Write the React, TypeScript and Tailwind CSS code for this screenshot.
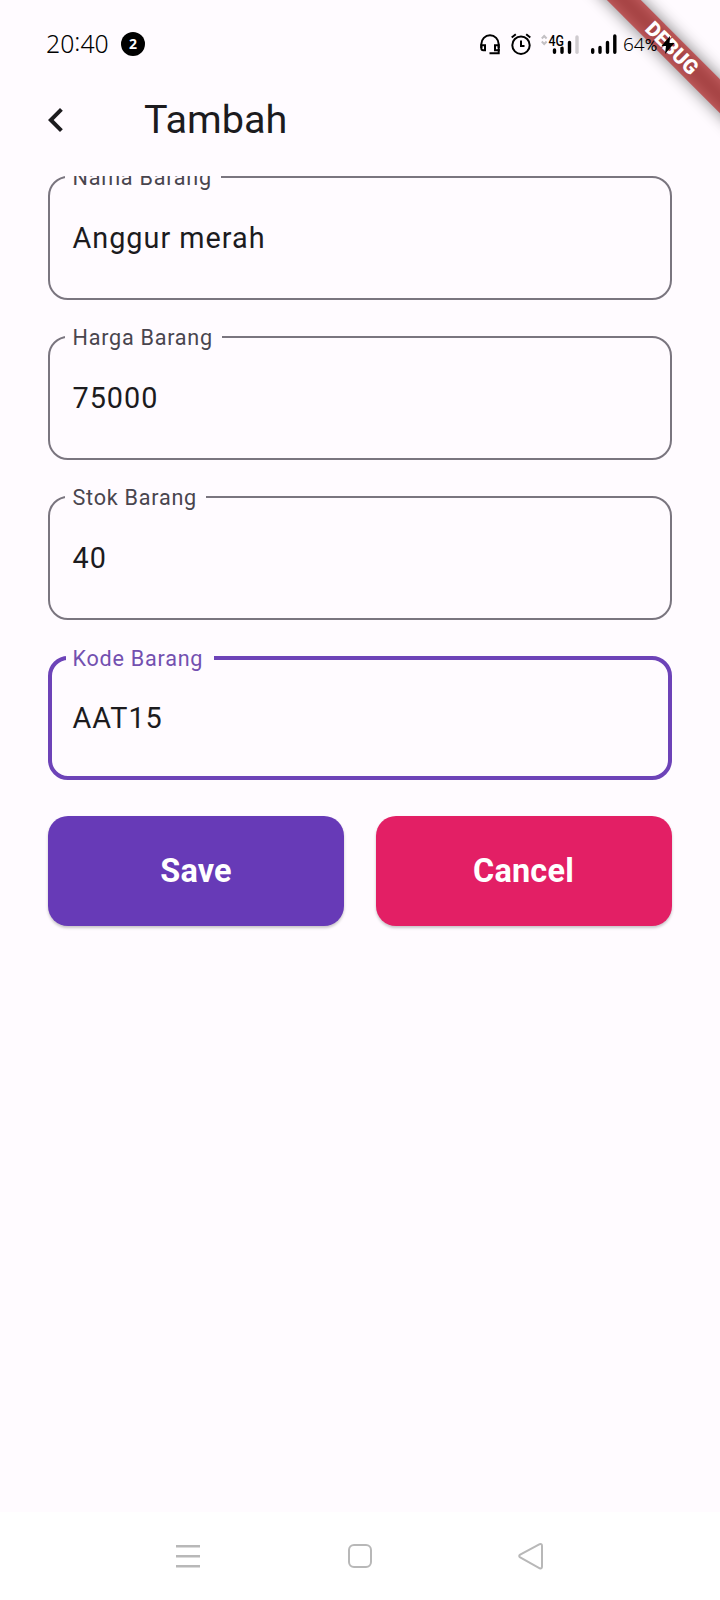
type FieldProps = { label: string; value: string; focused?: boolean };

function Field({ label, value, focused = false }: FieldProps) {
  return (
    <div
      className={
        focused
          ? "relative h-[124px] shrink-0 rounded-[20px] border-4 border-[#6d43b8] pl-[20.5px] pt-[39px]"
          : "relative h-[124px] shrink-0 rounded-[20px] border-2 border-[#7a757f] pl-[22.5px] pt-[41px]"
      }
    >
      <span
        className={
          focused
            ? "absolute left-[14px] -top-[15px] h-7 whitespace-nowrap bg-[#fffbff] pl-[6.5px] pr-[11px] text-[21.6px] leading-7 tracking-[0.75px] text-[#7350b0]"
            : "absolute left-[15px] -top-[14px] h-7 whitespace-nowrap bg-[#fffbff] pl-[7.5px] pr-[9px] text-[21.6px] leading-7 tracking-[0.75px] text-[#49454e]"
        }
      >
        {label}
      </span>
      <p className="text-[28.8px] leading-[38px] tracking-[1px] text-[#1c1b1e]">{value}</p>
    </div>
  );
}

function StatusBar() {
  return (
    <div className="relative z-20 flex h-[88px] items-center text-black">
      <span className="ml-[46px] flex w-[64px] -translate-y-px font-['Noto_Sans',sans-serif] text-[24.8px] leading-[30px] font-[350]">
        20<span className="-translate-y-[2px]">:</span>40
      </span>
      <span className="ml-[11px] flex size-6 items-center justify-center rounded-full bg-black font-['Open_Sans',sans-serif] text-[14px] leading-none font-bold text-white">
        2
      </span>
      <svg className="ml-[335px] h-6 w-5 shrink-0" viewBox="0 0 20 24" fill="none" stroke="black" strokeWidth="2">
        <path d="M1.300 16V12.200A8.700 9 0 0 1 18.700 12.200V16" />
        <path d="M1.300 13.300H5V18.300H3.300A2 2 0 0 1 1.300 16.300Z M18.700 13.300H15V18.300H18.700Z" />
        <path d="M18.700 17V21.300H9.500" />
      </svg>
      <svg className="ml-[11px] h-6 w-5 shrink-0" viewBox="0 0 20 24" fill="none" stroke="black" strokeWidth="2">
        <circle cx="10" cy="13.200" r="8.700" />
        <path d="M10 8.500V14H13.500" />
        <path d="M0.700 5.500L4.800 2.300M19.300 5.500L15.200 2.300" />
      </svg>
      <svg className="ml-[10px] h-6 w-[38px] shrink-0" viewBox="0 0 38 24">
        <path d="M0.800 6.500L3.200 4L5.600 6.500M0.800 9.500L3.200 12L5.600 9.500" fill="none" stroke="#c3c0c4" strokeWidth="2" />
        <g stroke="black" strokeWidth="3.400" strokeLinecap="round">
          <path d="M13.500 18V20.300M21 16V20.300M28.500 10.500V20.300" />
          <path d="M36 5V20.300" stroke="#cfcbcf" />
        </g>
        <text x="7.500" y="13.500" fontSize="15" fontWeight="500" fontFamily="Roboto, sans-serif" stroke="#fffbff" strokeWidth="1.500" paintOrder="stroke" textLength="15.500" lengthAdjust="spacingAndGlyphs">
          4G
        </text>
      </svg>
      <svg className="ml-[11px] h-6 w-[27px] shrink-0" viewBox="0 0 27 24" stroke="black" strokeWidth="3.400" strokeLinecap="round">
        <path d="M2.700 17.700V20.300M10 15.500V20.300M17.500 10.500V20.300M24.800 4V20.300" />
      </svg>
      <span className="ml-[6px] flex w-[34px] items-baseline font-['Noto_Sans',sans-serif] text-[19px] leading-6 font-[350] whitespace-nowrap">
        64<span className="font-[Roboto,sans-serif] text-[17px] font-normal">%</span>
      </span>
      <svg className="ml-[4px] h-6 w-[14px] shrink-0" viewBox="0 0 14 24">
        <path d="M9 4L0.500 14H5L4 22L13.500 11H8.500Z" fill="black" />
      </svg>
    </div>
  );
}

export default function App() {
  return (
    <div className="relative flex h-[1600px] w-[720px] flex-col overflow-hidden bg-[#fffbff] font-[Roboto,sans-serif]">
      <StatusBar />
      <div className="absolute top-0 left-[560px] z-10 h-[24px] w-[320px] origin-[160px_0px] rotate-45">
        <div className="absolute left-[60px] top-[56px] h-6 w-[200px] bg-black/50 blur-[7.9px]" />
        <div className="absolute left-[60px] top-[56px] flex h-6 w-[200px] items-center justify-center bg-[#b71c1c]/63 text-[20.4px] leading-none font-black text-white">
          DEBUG
        </div>
      </div>
      <header className="flex h-[88px] shrink-0 items-center pb-6">
        <svg className="ml-8 size-12" viewBox="0 0 24 24" fill="#1c1b1e">
          <path d="M15.410 7.410L14 6l-6 6 6 6 1.410-1.410L10.830 12z" />
        </svg>
        <h1 className="ml-16 text-[39.6px] leading-[50px] text-[#1c1b1e]">Tambah</h1>
      </header>
      <main className="flex min-h-0 flex-1 flex-col gap-9 overflow-hidden px-12">
        <Field label="Nama Barang" value="Anggur merah" />
        <Field label="Harga Barang" value="75000" />
        <Field label="Stok Barang" value="40" />
        <Field label="Kode Barang" value="AAT15" focused />
        <div className="grid shrink-0 grid-cols-2 gap-8">
          <button className="h-[110px] rounded-[20px] bg-[#673ab7] text-[32.4px] font-bold tracking-[0.2px] text-white shadow-[0_2px_3px_rgba(0,0,0,0.22)]">
            Save
          </button>
          <button className="h-[110px] rounded-[20px] bg-[#e31f65] pr-[7px] pl-[6px] text-[32.4px] font-bold tracking-[0.2px] text-white shadow-[0_2px_3px_rgba(0,0,0,0.22)]">
            Cancel
          </button>
        </div>
      </main>
      <nav className="flex h-[88px] shrink-0 items-center bg-white">
        <svg className="ml-[175px] h-[30px] w-[26px]" viewBox="0 0 26 30" stroke="#b8b8b8" strokeWidth="2.500">
          <path d="M1 5.300H25M1 15.300H25M1 25.300H25" />
        </svg>
        <svg className="ml-[146px] h-[30px] w-[26px]" viewBox="0 0 26 30" fill="none" stroke="#b8b8b8" strokeWidth="2">
          <rect x="2" y="4" width="22" height="22" rx="5" />
        </svg>
        <svg className="ml-[144px] h-[30px] w-[27px]" viewBox="0 0 27 30" fill="none" stroke="#b8b8b8" strokeWidth="2">
          <path d="M22.700 3.200L3.200 13.600Q1.200 15 3.200 16.400L22.700 27.300Q25 28 25 25.500V5Q25 2.500 22.700 3.200Z" />
        </svg>
      </nav>
    </div>
  );
}
